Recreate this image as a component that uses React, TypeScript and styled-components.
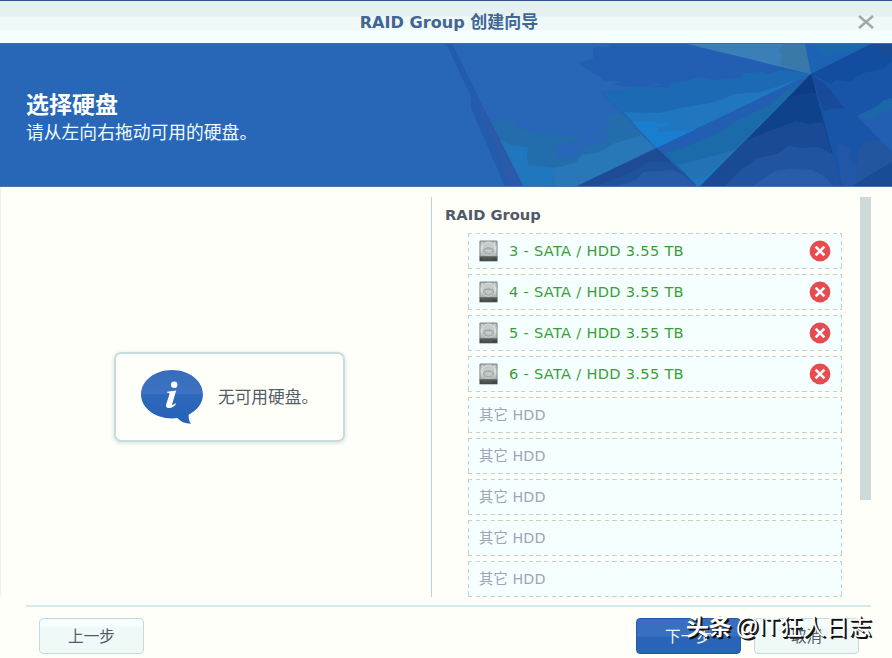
import React from "react";
import styled, { createGlobalStyle } from "styled-components";

const GlobalStyle = createGlobalStyle`
  * { box-sizing: border-box; }
  body {
    margin: 0;
    overflow: hidden;
    background: #fffff9;
    font-family: "DejaVu Sans", "Noto Sans CJK SC", sans-serif;
  }
`;

const Wizard = styled.div`
  width: 892px;
  height: 658px;
  display: flex;
  flex-direction: column;
  background: #fffff9;
  overflow: hidden;
`;

const TitleBar = styled.header`
  height: 43px;
  flex: none;
  display: grid;
  grid-template-columns: 44px 1fr 44px;
  align-items: center;
  border-top: 1px solid #2c5590;
  background: linear-gradient(#e5f1f0 0 15px, #eef9f8 16px 29px, #f6ffff 30px);
`;

const WindowTitle = styled.h1`
  grid-column: 2;
  margin: 0 0 0 6px;
  text-align: center;
  font-size: 16.1px;
  line-height: 24px;
  font-weight: bold;
  color: #426593;
  white-space: nowrap;
`;

const TitleChinese = styled.span`
  font-size: 17px;
`;

const CloseButton = styled.button`
  grid-column: 3;
  width: 20px;
  height: 20px;
  margin-left: 8px;
  padding: 0;
  border: 0;
  background: none;
  display: grid;
  place-items: center;
`;

const Banner = styled.section`
  position: relative;
  flex: none;
  height: 144px;
  padding: 49px 26px 0;
  background: #2866b8;
  border-top: 1px solid #426f9d;
  border-bottom: 1px solid #4675ab;
  color: #fff;
`;

const Facets = styled.svg`
  position: absolute;
  inset: 0;
`;

const Heading = styled.h2`
  position: relative;
  margin: 0;
  font-size: 23px;
  line-height: 25px;
  font-weight: bold;
`;

const Hint = styled.p`
  position: relative;
  margin: 3px 0 0;
  font-size: 17.8px;
  line-height: 24px;
  color: #f0fbff;
`;

const Content = styled.main`
  flex: none;
  height: 410px;
  padding-top: 10px;
  display: flex;
  border-left: 1px solid #f0f0ea;
`;

const AvailablePane = styled.section`
  width: 431px;
  height: 400px;
  padding: 3px 0 0 0;
  display: flex;
  align-items: center;
  justify-content: center;
  border-right: 1px solid #c0d0d2;
`;

const NoticeCard = styled.div`
  width: 231px;
  height: 90px;
  margin: -3px 0 0 27px;
  padding-left: 25px;
  display: flex;
  align-items: center;
  border: 2px solid #c7dcdd;
  border-radius: 7px;
  box-shadow: 0 1px 4px #d3ddd9;
`;

const NoticeText = styled.span`
  margin: 0 0 2px 15px;
  font-size: 16.7px;
  color: #535b69;
`;

const GroupPane = styled.section`
  width: 409px;
  padding-left: 13px;
`;

const GroupTitle = styled.h3`
  margin: 7px 0 7px;
  font-size: 14.7px;
  line-height: 22px;
  font-weight: bold;
  color: #505968;
`;

const SlotList = styled.div`
  width: 374px;
  margin-left: 23px;
  display: flex;
  flex-direction: column;
  gap: 5px;
`;

const Slot = styled.div<{ $filled?: boolean }>`
  --dash-x: repeating-linear-gradient(90deg, #bdd2d3 0 4.2px, transparent 4.2px 7.6px);
  --dash-y: repeating-linear-gradient(#bdd2d3 0 4.2px, transparent 4.2px 7.6px);
  height: 36px;
  padding: 0 11px;
  display: flex;
  align-items: center;
  background:
    var(--dash-x) top / 100% 1px no-repeat,
    var(--dash-x) bottom / 100% 1px no-repeat,
    var(--dash-y) left / 1px 100% no-repeat,
    var(--dash-y) right / 1px 100% no-repeat,
    #f6ffff;
  font-size: ${(p) => (p.$filled ? "14.6px" : "14.3px")};
  letter-spacing: ${(p) => (p.$filled ? "0.3px" : "0.1px")};
  color: ${(p) => (p.$filled ? "#399e36" : "#9ea5b6")};
  white-space: nowrap;
`;

const DiskName = styled.span`
  flex: 1;
  margin: 0 0 2px 11px;
`;

const EmptyName = styled.span`
  margin-bottom: 3px;
`;

const RemoveButton = styled.button`
  width: 22px;
  height: 22px;
  padding: 0;
  border: 0;
  background: none;
  display: flex;
`;

const ScrollThumb = styled.div`
  width: 11px;
  height: 303px;
  margin-left: 19px;
  background: #ccdad9;
`;

const Footer = styled.footer`
  flex: 1;
  margin-top: 8px;
  margin-left: 26px;
  width: 845px;
  padding: 11px 12px 0 13px;
  display: flex;
  align-items: flex-start;
  border-top: 2px solid #d3ebeb;
`;

const FooterButton = styled.button<{ $primary?: boolean }>`
  width: 105px;
  height: 36px;
  padding: 0 0 3px;
  border: 1px solid ${(p) => (p.$primary ? "#2459a5" : "#c8dadb")};
  border-radius: 4px;
  background: ${(p) =>
    p.$primary
      ? "linear-gradient(#386fc1 0 17px, #2865b9 18px)"
      : "linear-gradient(#f5ffff 0 7px, #eef9f8 9px)"};
  color: ${(p) => (p.$primary ? "#eef8ff" : "#535b69")};
  font-family: inherit;
  font-size: 15.6px;
`;

const ButtonGroup = styled.div`
  position: relative;
  margin-left: auto;
  display: flex;
  gap: 13px;
`;

const Watermark = styled.div`
  position: absolute;
  left: 50px;
  top: -8px;
  display: flex;
  align-items: baseline;
  gap: 4px;
  white-space: nowrap;
  color: #fff;
  font-family: "Liberation Sans", "Noto Sans CJK SC", sans-serif;
  font-size: 23px;
  line-height: 34px;
  text-shadow: 1px 1px 0 #111, 2px 2px 0 #111;
  pointer-events: none;
`;

const Brand = styled.b`
  font-size: 22.8px;
`;

const BannerArt = () => (
  <Facets width="892" height="142" viewBox="0 44 892 142" aria-hidden="true">
    <path d="M446 43h6l31 64 41 80h-19l-34-79v-11z" fill="#235cad" />
    <path d="M477 103l7 7 39 77h-12z" fill="#2a5aa8" />

    <path
      d="M492 121l23-2-1 7 12 5 19 4 6-2v-14h2v15l27 3 23-5 8-8-10-6 9-3 19-3 16 25 10 11-80 39h-51z"
      fill="#236dac"
    />
    <path d="M556 146l19-6 35-9-6 11-24 8-12 10-10-2 1-4-7-3z" fill="#2866b8" />
    <path d="M640 134l15 14-80 39h-21v-19l21-5 7-8 18-3 15-9 25-7z" fill="#2877b8" />
    <path d="M500 140l10 5 18 2-1 10 1 8 27 3-2 19h-29z" fill="#2077bd" />

    <path
      d="M594 47h15v-4h74l128 31-154 74-57-56 40-3 22-5-58-3-5-4-8-5-13-9 15-5v-9z"
      fill="#225fb3"
    />
    <path d="M594 80l58 4-24 6-29 2z" fill="#2866b8" />
    <path
      d="M601 92l24-2 15-4 28 2 3-5 15-2 14-4 15 3 25-2 3-5 19-1 5 3 13-5 31 4-154 74z"
      fill="#1c6ab3"
    />
    <path d="M611 84l16-2 29 2-8 2-21 1z" fill="#225fb3" />
    <path d="M624 112l36 1 20-5 35-6 20-8 25-2 10-3 32-11-146 70z" fill="#2076bf" />
    <path d="M632 122l21-1 6 2 12-1-5 4-9 1 2 5 38-3-40 19z" fill="#1a7ed0" />

    <path d="M575 187l82-39 41 39z" fill="#1d4c95" />
    <path d="M595 187l24-10 17-7 14-9 25 1 22 25z" fill="#1f529d" />
    <path d="M613 187l23-7 7-8 30-2 12 6 12 11z" fill="#275ba7" />
    <path d="M811 74l-154 74 41 39z" fill="#225fb3" />
    <path d="M665 153l18-5 35-15 20-13 30-14 17-14 16-8-46 52-57 51z" fill="#1b6aaa" />
    <path d="M678 165l20-5 36-10 16-13 10-13 2 0-64 63z" fill="#2272b5" />
    <path d="M683 170l15 17 22-22-17 13-8 1z" fill="#1f78c4" />

    <path d="M683 43h122l6 31z" fill="#3a7fb8" />
    <path d="M783 43h22l6 31-31-9 2-10-3-4z" fill="#3879aa" />
    <path d="M805 43h68l-62 31z" fill="#1d63b5" />
    <path d="M812 43h59l-19 9-14-1-9 5-7-2z" fill="#1b69ac" />
    <path d="M811 74l62-31h19v144h-50z" fill="#1855a8" />
    <path d="M811 74l62-31h19v18l-9 8-20 4-13 9-14-2-5 4z" fill="#124da0" />
    <path d="M873 43h19v14l-10-4-5-4-8-1z" fill="#1a4b97" />
    <path d="M811 74l17 13 17 22-9-1-13 3z" fill="#174b9a" />
    <path d="M857 116l35-18v54z" fill="#225fb3" />
    <path d="M859 115l14-5 11-10 8-2v11l-13 6-8 5-11-2z" fill="#1c67aa" />
    <path d="M836 143l10 2 5 7-2 7 10 8 2 20h-19z" fill="#2256a6" />
    <path d="M858 149l8-8 14-1 12 12v12l-42 23h11l-4-15z" fill="#23569f" />
    <path d="M850 187l42-25v25z" fill="#194c95" />

    <path d="M811 74L700 187h142z" fill="#10428b" />
    <path d="M811 74l-24 25 11-4 11-2 7 0z" fill="#0d3c85" />
    <path d="M747 140l19-8 20-7 10-4 13 3 14-2 19 65H700z" fill="#1a4a95" />
    <path d="M724 187l17-17 16-12 20-4 12-8 12 2 17-1 10 5 5 2 9 33z" fill="#2154a0" />
    <path d="M752 187l12-9 11-7 15-2 23 1 12 7 9 10z" fill="#295daa" />
  </Facets>
);

const DiskIcon = () => (
  <svg width="19" height="22" viewBox="0 0 20 22" preserveAspectRatio="none" aria-hidden="true">
    <defs>
      <linearGradient id="metal" x2="0" y2="1">
        <stop stopColor="#a3aaaa" />
        <stop offset=".45" stopColor="#dde3e2" />
        <stop offset="1" stopColor="#a4acab" />
      </linearGradient>
    </defs>
    <path d="M1 1h18v16H1z" fill="url(#metal)" stroke="#7f8887" />
    <ellipse cx="10" cy="8.5" rx="7" ry="6.5" fill="#c5cccb" stroke="#e1e6e5" strokeWidth=".8" />
    <ellipse cx="10" cy="11" rx="5.6" ry="3.2" fill="#b3bab9" stroke="#929b9a" strokeWidth=".8" />
    <path d="M7 10.5h6M8 12h5" stroke="#d4dad8" strokeWidth=".8" />
    <circle cx="3.5" cy="3" r=".7" fill="#eef2ef" />
    <circle cx="16.5" cy="3" r=".7" fill="#eef2ef" />
    <path d="M.5 16.5h19v4.8H.5z" fill="#424946" />
    <path d="M1 17h18" stroke="#6a736d" />
    <path d="M3 19h11" stroke="#5a635d" />
  </svg>
);

const RemoveIcon = () => (
  <svg width="22" height="22" viewBox="0 0 22 22" aria-hidden="true">
    <circle cx="11" cy="11" r="10.4" fill="#e64b50" />
    <path d="M6.6 6.6l8.8 8.8M15.4 6.6l-8.8 8.8" stroke="#fff8fa" strokeWidth="2.7" />
  </svg>
);

const InfoIcon = () => (
  <svg width="62" height="56" viewBox="0 0 62 56" aria-hidden="true">
    <defs>
      <linearGradient id="bubble" x2="0" y2="1">
        <stop stopColor="#386cbb" />
        <stop offset=".44" stopColor="#3e73c4" />
        <stop offset=".46" stopColor="#2e68ba" />
        <stop offset="1" stopColor="#2562b7" />
      </linearGradient>
    </defs>
    <path
      d="M31 1C13.5 1 0 12 0 25.3S13.5 49.5 31 49.5c2 0 3.7 0 5.5-.4 2.8 3.5 7.4 5.6 13.5 5.7-1.7-1.7-2.5-5.2-2.3-9.1C56.5 41.2 62 34 62 25.3 62 12 48.5 1 31 1z"
      fill="url(#bubble)"
    />
    <circle cx="33.2" cy="15.8" r="3.2" fill="#fff" />
    <path
      d="M26.2 22.7l9-1.1-4 13.5c-.4 1.3.7 1.2 3-.9l.8.8c-2.3 3-4.7 4-6.7 4-3 0-3.8-1.6-3-4.1l3.1-9.4c.4-1.4-.3-1.8-2.5-1.8z"
      fill="#fff"
    />
  </svg>
);

const disks = [3, 4, 5, 6];
const emptySlots = [7, 8, 9, 10, 11];

export default function App() {
  return (
    <Wizard>
      <GlobalStyle />
      <TitleBar>
        <WindowTitle>
          RAID Group <TitleChinese>创建向导</TitleChinese>
        </WindowTitle>
        <CloseButton aria-label="关闭">
          <svg width="18" height="16" viewBox="0 0 18 16">
            <path d="M2 2l14 12M16 2L2 14" stroke="#a2a8a9" strokeWidth="2.4" />
          </svg>
        </CloseButton>
      </TitleBar>
      <Banner>
        <BannerArt />
        <Heading>选择硬盘</Heading>
        <Hint>请从左向右拖动可用的硬盘。</Hint>
      </Banner>
      <Content>
        <AvailablePane>
          <NoticeCard>
            <InfoIcon />
            <NoticeText>无可用硬盘。</NoticeText>
          </NoticeCard>
        </AvailablePane>
        <GroupPane>
          <GroupTitle>RAID Group</GroupTitle>
          <SlotList>
            {disks.map((bay) => (
              <Slot key={bay} $filled>
                <DiskIcon />
                <DiskName>{bay} - SATA / HDD 3.55 TB</DiskName>
                <RemoveButton aria-label="移除">
                  <RemoveIcon />
                </RemoveButton>
              </Slot>
            ))}
            {emptySlots.map((bay) => (
              <Slot key={bay}>
                <EmptyName>其它 HDD</EmptyName>
              </Slot>
            ))}
          </SlotList>
        </GroupPane>
        <ScrollThumb />
      </Content>
      <Footer>
        <FooterButton>上一步</FooterButton>
        <ButtonGroup>
          <FooterButton $primary>下一步</FooterButton>
          <FooterButton>取消</FooterButton>
          <Watermark>
            <Brand>头条</Brand>
            <span>@IT狂人日志</span>
          </Watermark>
        </ButtonGroup>
      </Footer>
    </Wizard>
  );
}
